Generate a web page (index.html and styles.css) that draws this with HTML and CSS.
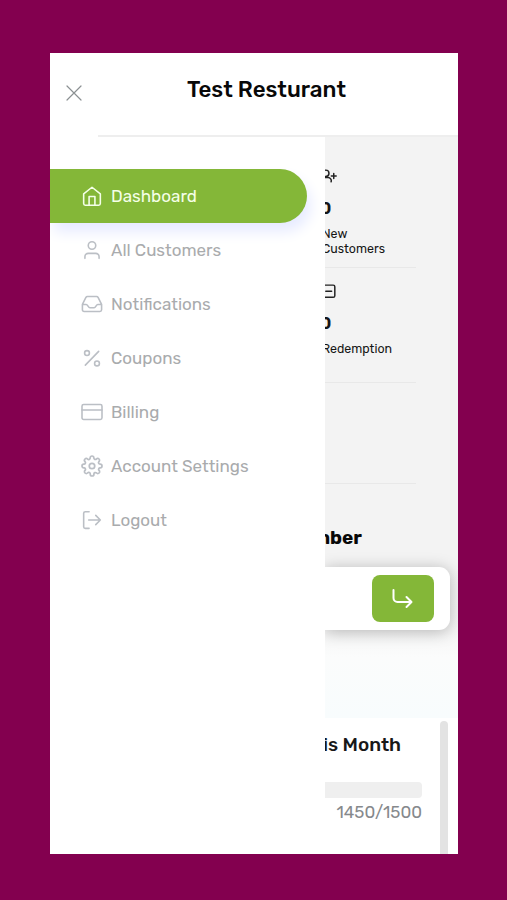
FILE: index.html
```html
<!DOCTYPE html>
<html lang="en">
<head>
<meta charset="utf-8">
<title>Test Resturant</title>
<link rel="stylesheet" href="styles.css">
</head>
<body>
<div class="screen">
  <header class="header">
    <button class="close" aria-label="Close"><svg width="16" height="16" viewBox="0 0 16 16"><path d="M1 1l14 14M15 1L1 15"/></svg></button>
    <h1 class="title">Test Resturant</h1>
  </header>
  <div class="body">
    <nav class="drawer">
      <a class="item active"><svg class="icon" viewBox="0 0 24 24"><path d="M2 9.500 12 1.500l10 8V21a2 2 0 0 1-2 2H4a2 2 0 0 1-2-2zM8.500 23V12.500h7V23"/></svg><span>Dashboard</span></a>
      <a class="item"><svg class="icon" viewBox="0 0 24 24"><circle cx="12" cy="6.500" r="4.500"/><path d="M3.500 22v-2a4 4 0 0 1 4-4h9a4 4 0 0 1 4 4v2"/></svg><span>All Customers</span></a>
      <a class="item"><svg class="icon" viewBox="0 0 24 24"><path d="M.5 12.500H5c2 0 2.500 4 4.500 4h5c2 0 2.500-4 4.500-4h4.500M6.500 3h11a2 2 0 0 1 1.800 1.100l4.200 8.400V19a2 2 0 0 1-2 2h-19a2 2 0 0 1-2-2v-6.500l4.200-8.400A2 2 0 0 1 6.500 3z"/></svg><span>Notifications</span></a>
      <a class="item"><svg class="icon" viewBox="0 0 24 24"><path d="M20 4 4 20.500"/><circle cx="6" cy="6" r="2.900"/><circle cx="18" cy="18.500" r="2.900"/></svg><span>Coupons</span></a>
      <a class="item"><svg class="icon" viewBox="0 0 24 24"><rect x="0" y="3" width="24" height="18" rx="2"/><path d="M0 9.500h24"/></svg><span>Billing</span></a>
      <a class="item"><svg class="icon" viewBox="1 1 22 22"><circle cx="12" cy="12" r="3"/><path d="M19.400 15a1.650 1.650 0 0 0 .33 1.820l.06.06a2 2 0 1 1-2.830 2.830l-.06-.06a1.650 1.650 0 0 0-2.800 1.170V21a2 2 0 0 1-4 0v-.09A1.650 1.650 0 0 0 7.200 19.650l-.06.06a2 2 0 1 1-2.830-2.830l.06-.06A1.650 1.650 0 0 0 3.200 14H3a2 2 0 0 1 0-4h.09A1.650 1.650 0 0 0 4.350 7.200l-.06-.06a2 2 0 1 1 2.830-2.830l.06.06A1.650 1.650 0 0 0 10 3.200V3a2 2 0 0 1 4 0v.09a1.650 1.650 0 0 0 2.800 1.260l.06-.06a2 2 0 1 1 2.830 2.830l-.06.06A1.650 1.650 0 0 0 20.800 10H21a2 2 0 0 1 0 4h-.09a1.650 1.650 0 0 0-1.510 1z"/></svg><span>Account Settings</span></a>
      <a class="item"><svg class="icon" viewBox="0 0 24 24"><path d="M8.500 22H4a2 2 0 0 1-2-2V4a2 2 0 0 1 2-2h4.500M8 12h14M16.500 6.500 22 12l-5.500 5.500"/></svg><span>Logout</span></a>
    </nav>
    <main class="content">
      <section class="stats">
        <div class="stat">
          <svg class="stat-icon" viewBox="0 0 16 16"><circle cx="4.500" cy="5" r="3"/><path d="M0 13v-1a3 3 0 0 1 3-3h3.500a3 3 0 0 1 3 4M9.700 7.500h4.600M12 5.200v4.600"/></svg>
          <strong class="count">0</strong>
          <p class="label">New<br>Customers</p>
        </div>
        <div class="stat second">
          <svg class="stat-icon" viewBox="0 0 16 16"><rect x="1" y="2" width="12" height="11.500" rx="1.500"/><path d="M4.500 7.800h5.500"/></svg>
          <strong class="count">0</strong>
          <p class="label">Redemption</p>
        </div>
        <div class="stat blank"></div>
      </section>
      <h2 class="number"><span>Number</span></h2>
      <div class="entry"><button class="go" aria-label="Submit"><svg width="24" height="24" viewBox="0 0 24 24"><path d="M2.500 3v8a4 4 0 0 0 4 4H20M15.500 10l5 5-5 5"/></svg></button></div>
      <section class="usage">
        <div class="usage-main">
          <h3 class="month"><span>This Month</span></h3>
          <div class="bar"></div>
          <p class="quota">1450/1500</p>
        </div>
        <div class="scrollbar"></div>
      </section>
    </main>
  </div>
</div>
</body>
</html>
```
FILE: styles.css
```css
* { box-sizing: border-box; }
body {
  margin: 0;
  height: 900px;
  padding: 53px 49px 46px 50px;
  background: #83004f;
  font-family: Rubik, Roboto, "Liberation Sans", sans-serif;
  overflow: hidden;
}
h1, h2, h3, p { margin: 0; }
button { border: 0; padding: 0; background: none; display: grid; place-items: center; }
svg { fill: none; stroke-linecap: round; stroke-linejoin: round; flex: none; }
.screen { width: 408px; height: 801px; background: #fff; overflow: hidden; }
.header { display: flex; height: 84px; }
.close { width: 48px; height: 80px; }
.close svg { stroke: #8b9092; stroke-width: 1.2; }
.title {
  flex: 1;
  border-bottom: 2px solid #eee;
  padding: 23px 0 0 89px;
  font-size: 22.3px;
  line-height: 28px;
  font-weight: 500;
  color: #080808;
  white-space: nowrap;
}
.body { display: flex; height: 717px; }
.drawer { width: 275px; padding-top: 32px; background: #fff; }
.item {
  display: flex;
  align-items: center;
  gap: 9px;
  width: 257px;
  height: 54px;
  padding-left: 32px;
  color: #a9abad;
  font-size: 17px;
  white-space: nowrap;
}
.item span { margin-top: -1px; }
.icon { width: 20px; height: 20px; stroke: #bbbfc5; stroke-width: 1.9; overflow: visible; }
.active { color: #f5ffe8; background: #84b738; border-radius: 0 27px 27px 0; box-shadow: 4px 9px 14px #e7ebff; }
.active .icon { stroke: #f4ffe8; }
.content {
  width: 133px;
  overflow: hidden;
  background: linear-gradient(#f3f3f3 0 430px, #f6f6f6 495px, #fbfcfc 520px, #f8fcfd 580px);
}
.stats { width: 95px; padding-top: 31px; margin-left: -4px; }
.stat { height: 100px; border-bottom: 1px solid #e8e8e8; color: #151515; }
.second { height: 115px; padding-top: 15px; }
.blank { height: 101px; }
.stat-icon { display: block; width: 17px; height: 17px; stroke: #222; stroke-width: 1.4; }
.count { display: block; margin: 13px 0 0 -1px; font-size: 17px; line-height: 20px; font-weight: 600; }
.label { margin: 8px 0 0 1px; font-size: 12.4px; line-height: 15px; }
.number {
  display: flex;
  justify-content: flex-end;
  width: 37px;
  margin-top: 41px;
  font-size: 19px;
  line-height: 26px;
  font-weight: 700;
  color: #080808;
}
.entry {
  display: flex;
  justify-content: flex-end;
  width: 125px;
  height: 63px;
  margin-top: 16px;
  padding: 8px 16px;
  background: #fff;
  border-radius: 0 11px 11px 0;
  box-shadow: 0 2px 16px #0004;
}
.go { width: 62px; height: 47px; background: #84b738; border-radius: 8px; }
.go svg { stroke: #fff; stroke-width: 2; }
.usage { display: flex; height: 137px; margin-top: 88px; background: #fff; }
.usage-main { width: 115px; padding-top: 14px; }
.month { display: flex; justify-content: flex-end; width: 76px; font-size: 19px; line-height: 26px; font-weight: 500; color: #181818; white-space: nowrap; }
.bar { width: 97px; height: 16px; margin-top: 24px; background: #efefef; border-radius: 0 4px 4px 0; }
.quota { width: 97px; margin-top: 4px; font-size: 17px; line-height: 20px; text-align: right; color: #86898c; }
.scrollbar { width: 8px; margin-top: 3px; background: #e3e3e3; border-radius: 4px 4px 0 0; }
```
